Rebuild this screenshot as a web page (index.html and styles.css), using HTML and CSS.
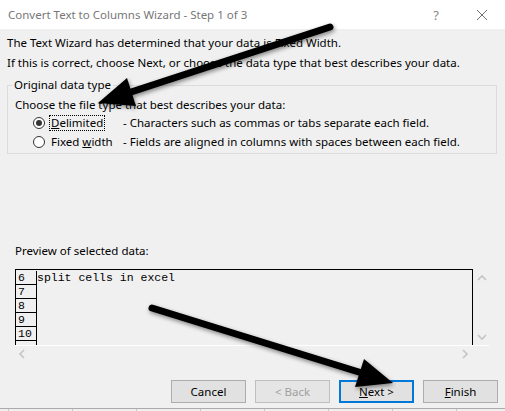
FILE: index.html
```html
<!DOCTYPE html>
<html lang="en">
<head>
    <meta charset="UTF-8">
    <title>Convert Text to Columns Wizard</title>
    <link rel="stylesheet" href="styles.css">
</head>
<body>
    <div class="window">
        <div class="titlebar">
            <span class="title">Convert Text to Columns Wizard - Step 1 of 3</span>
            <span class="help">?</span>
            <svg class="close" width="12" height="12" viewBox="0 0 12 12">
                <path d="M1 1 L11 11 M11 1 L1 11" stroke="#6e6e6e" stroke-width="1" fill="none"/>
            </svg>
        </div>

        <div class="content">
            <p class="line">The Text Wizard has determined that your data is Fixed Width.</p>
            <p class="line">If this is correct, choose Next, or choose the data type that best describes your data.</p>

            <fieldset class="group">
                <legend>Original data type</legend>
                <div class="choose">Choose the file type that best describes your data:</div>
                <div class="option">
                    <span class="radio checked"></span>
                    <span class="opt-label"><span class="focus"><u>D</u>elimited</span></span>
                    <span class="opt-desc">- Characters such as commas or tabs separate each field.</span>
                </div>
                <div class="option">
                    <span class="radio"></span>
                    <span class="opt-label"><span>Fixed <u>w</u>idth</span></span>
                    <span class="opt-desc">- Fields are aligned in columns with spaces between each field.</span>
                </div>
            </fieldset>

            <div class="preview-label">Preview of selected data:</div>

            <div class="preview">
                <div class="data">
                    <div class="row"><span class="num">6</span><span class="cell">split cells in excel</span></div>
                    <div class="row"><span class="num">7</span><span class="cell"></span></div>
                    <div class="row"><span class="num">8</span><span class="cell"></span></div>
                    <div class="row"><span class="num">9</span><span class="cell"></span></div>
                    <div class="row"><span class="num">10</span><span class="cell"></span></div>
                    <div class="row"><span class="num"></span><span class="cell"></span></div>
                </div>
                <div class="vscroll">
                    <svg width="12" height="8" viewBox="0 0 12 8"><path d="M2 6 L6 2 L10 6" stroke="#c4c4c4" stroke-width="1.6" fill="none"/></svg>
                    <svg width="12" height="8" viewBox="0 0 12 8"><path d="M2 2 L6 6 L10 2" stroke="#c4c4c4" stroke-width="1.6" fill="none"/></svg>
                </div>
                <div class="hscroll">
                    <svg width="8" height="12" viewBox="0 0 8 12"><path d="M6 2 L2 6 L6 10" stroke="#c4c4c4" stroke-width="1.6" fill="none"/></svg>
                    <svg width="8" height="12" viewBox="0 0 8 12"><path d="M2 2 L6 6 L2 10" stroke="#c4c4c4" stroke-width="1.6" fill="none"/></svg>
                </div>
            </div>

            <div class="buttons">
                <button class="btn">Cancel</button>
                <button class="btn disabled">&lt; Back</button>
                <button class="btn default"><u>N</u>ext &gt;</button>
                <button class="btn"><u>F</u>inish</button>
            </div>
        </div>

        <div class="sheet-edge"></div>

        <!-- annotation arrows drawn over the dialog -->
        <svg class="arrows" width="505" height="411" viewBox="0 0 505 411">
            <line x1="330" y1="27" x2="128" y2="93" stroke="#000" stroke-width="7" stroke-linecap="round"/>
            <polygon points="98,103 136,106 127,78" fill="#000"/>
            <line x1="152" y1="308" x2="362" y2="373" stroke="#000" stroke-width="7" stroke-linecap="round"/>
            <polygon points="393,383 355,387 364,359" fill="#000"/>
        </svg>
    </div>
</body>
</html>
```

FILE: styles.css
```css
html, body {
    margin: 0;
    padding: 0;
}
body {
    font-family: "Noto Sans", sans-serif;
    font-size: 11.5px;
    color: #000;
}
.window {
    position: relative;
    width: 505px;
    height: 411px;
    overflow: hidden;
    background-color: #f0f0f0;
    display: flex;
    flex-direction: column;
}
.titlebar {
    height: 29px;
    flex: none;
    background-color: #fff;
    display: flex;
    align-items: center;
    padding-left: 8px;
    color: #777;
}
.title {
    flex: 1;
}
.help {
    width: 12px;
    margin-right: 34px;
    text-align: center;
    font-size: 13px;
    color: #888;
}
.close {
    margin-right: 17px;
}
.content {
    flex: 1;
    padding: 4px 7px 0 7px;
}
.line {
    margin: 0;
    line-height: 20px;
}
.group {
    margin: 4px 1px 0 0;
    padding: 0 7px 2px 7px;
    border: 1px solid #dcdcdc;
}
.group legend {
    margin-left: -3px;
    padding: 0 2px;
    line-height: 16px;
}
.choose {
    margin-top: 4px;
    line-height: 16px;
}
.option {
    height: 19px;
    display: flex;
    align-items: center;
}
.radio {
    box-sizing: border-box;
    flex: none;
    width: 12px;
    height: 12px;
    margin-left: 18px;
    border: 1px solid #333;
    border-radius: 50%;
    background-color: #fff;
    position: relative;
}
.radio.checked::after {
    content: "";
    position: absolute;
    left: 2px;
    top: 2px;
    width: 6px;
    height: 6px;
    border-radius: 50%;
    background-color: #333;
}
.opt-label {
    flex: none;
    width: 74px;
    margin-left: 4px;
}
.opt-label span {
    display: inline-block;
    padding: 0 1px;
    line-height: 14px;
    border: 1px solid transparent;
}
.opt-label .focus {
    border: 1px dotted #000;
}
.preview-label {
    margin: 89px 0 0 8px;
    line-height: 16px;
}
.preview {
    margin: 10px 0 0 8px;
    display: grid;
    grid-template-columns: 458px 16px;
    grid-template-rows: 76px 16px;
}
.data {
    box-sizing: border-box;
    border: 1px solid #000;
    border-bottom: none;
    padding-top: 1px;
    overflow: hidden;
    font-family: "Liberation Mono", monospace;
    font-size: 11.5px;
}
.row {
    display: flex;
    height: 14px;
    line-height: 13px;
}
.num {
    box-sizing: border-box;
    width: 21px;
    padding-left: 2px;
    border-right: 1px solid #000;
    border-bottom: 1px solid #000;
}
.vscroll {
    display: flex;
    flex-direction: column;
    justify-content: space-between;
    align-items: center;
    padding: 5px 0 4px 2px;
}
.hscroll {
    grid-column: 1 / 3;
    border-top: 1px solid #fff;
    display: flex;
    justify-content: space-between;
    align-items: center;
    padding: 0 20px 0 3px;
}
.buttons {
    margin-top: 19px;
    display: flex;
    justify-content: flex-end;
    gap: 9px;
}
.btn {
    box-sizing: border-box;
    width: 75px;
    height: 23px;
    padding: 0;
    font-family: "Noto Sans", sans-serif;
    font-size: 11.5px;
    color: #000;
    background-color: #e1e1e1;
    border: 1px solid #adadad;
}
.btn.disabled {
    color: #a0a0a0;
    border-color: #bfbfbf;
    background-color: #e5e5e5;
}
.btn.default {
    border: 2px solid #0078d7;
}
.sheet-edge {
    flex: none;
    height: 2px;
    border-top: 1px solid #ababab;
    background: repeating-linear-gradient(to right, transparent 0, transparent 8px, #c8c8c8 8px, #c8c8c8 9px, transparent 9px, transparent 64px);
}
.arrows {
    position: absolute;
    left: 0;
    top: 0;
    filter: drop-shadow(1px 2px 2px rgba(0, 0, 0, 0.45));
}
```
